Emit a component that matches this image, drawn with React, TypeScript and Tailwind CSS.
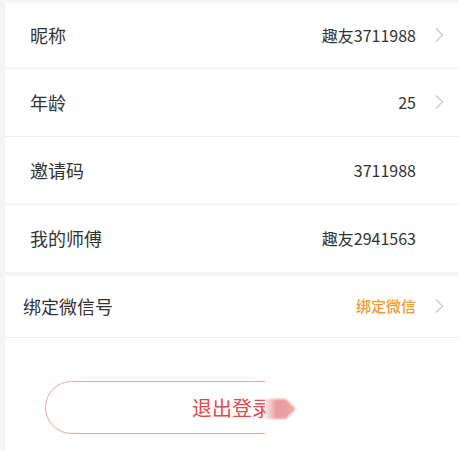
import React from 'react';

const Chevron = ({ hidden = false }: { hidden?: boolean }) => (
  <svg
    width="10"
    height="16"
    viewBox="0 0 10 16"
    className={hidden ? 'invisible ml-[18px]' : 'ml-[18px]'}
    fill="none"
  >
    <polyline points="2,1.5 8.5,8 2,14.5" stroke="#c9c9c9" strokeWidth="1.3" strokeLinejoin="round" />
  </svg>
);

const App = () => {
  const rows = [
    { label: '昵称', value: '趣友3711988', arrow: true, h: 'h-[66px]' },
    { label: '年龄', value: '25', arrow: true, h: 'h-[68px]' },
    { label: '邀请码', value: '3711988', arrow: false, h: 'h-[68px]' },
    { label: '我的师傅', value: '趣友2941563', arrow: false, h: 'h-[67px]' },
  ];

  return (
    <div
      className="min-h-[451px] bg-[#f4f4f6] pl-[5px] pt-[3px] text-[#333]"
      style={{ fontFamily: '"Noto Sans CJK SC", "Noto Sans", sans-serif' }}
    >
      <div className="bg-white">
        {rows.map((row, i) => (
          <div
            key={row.label}
            className={`flex items-center pb-[2px] pl-[25px] pr-[15px] ${row.h} ${i < rows.length - 1 ? 'border-b border-[#efefef]' : ''}`}
          >
            <span className="text-[18px] leading-none">{row.label}</span>
            <span className="ml-auto text-[16px] leading-none">{row.value}</span>
            <Chevron hidden={!row.arrow} />
          </div>
        ))}
      </div>

      <div className="mt-[4px] bg-white">
        <div className="flex h-[62px] items-center border-b border-[#efefef] pb-[2px] pl-[18px] pr-[15px]">
          <span className="text-[18px] leading-none">绑定微信号</span>
          <span className="ml-auto text-[15px] font-medium leading-none text-[#f29a30]">绑定微信</span>
          <Chevron />
        </div>

        <div className="h-[114px] px-[40px] pt-[43px]">
          <div className="relative">
            <button className="flex h-[53px] w-full items-center justify-center rounded-full border border-[#eba49c] bg-white text-[20px] text-[#e24b46]">
              退出登录
            </button>
            <div className="absolute -right-[2px] -top-[2px] -bottom-[2px] left-[220px] bg-white" />
            <svg
              className="absolute left-[216px] top-[15px]"
              width="38"
              height="26"
              viewBox="0 0 38 26"
              style={{ filter: 'blur(1.2px)' }}
            >
              <defs>
                <linearGradient id="ag" x1="0" x2="1" y1="0" y2="0">
                  <stop offset="0" stopColor="#f4c4c4" stopOpacity="0.3" />
                  <stop offset="0.4" stopColor="#e99a9c" />
                  <stop offset="1" stopColor="#eda9aa" />
                </linearGradient>
              </defs>
              <polygon points="2,3 25,3 35,13 25,23 2,23" fill="url(#ag)" />
            </svg>
          </div>
        </div>
      </div>
    </div>
  );
};

export default App;
